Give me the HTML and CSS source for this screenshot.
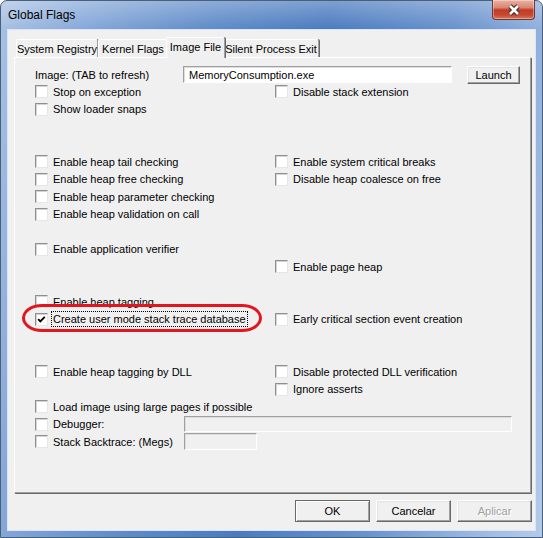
FILE: index.html
```html
<!DOCTYPE html>
<html>
  <head>
    <link rel="stylesheet" href="styles.css">
  </head>
  <body>
    <div class="window">
      <div class="titlebar">
        <span class="title">Global Flags</span>
        <div class="close">
          <svg width="16" height="12" viewBox="0 0 16 12">
            <path d="M4 2 L12 10 M12 2 L4 10" stroke="#3b2622" stroke-width="4.6" fill="none"/>
            <path d="M4 2 L12 10 M12 2 L4 10" stroke="#fff" stroke-width="2.6" fill="none"/>
          </svg>
        </div>
      </div>

      <div class="client">
        <div class="tabs">
          <div class="tab tab-registry">System Registry</div>
          <div class="tab tab-kernel">Kernel Flags</div>
          <div class="tab tab-image selected">Image File</div>
          <div class="tab tab-silent">Silent Process Exit</div>
        </div>

        <div class="panel">
          <div class="image-row">
            <span class="image-label">Image: (TAB to refresh)</span>
            <div class="textbox image-name">MemoryConsumption.exe</div>
            <div class="btn launch">Launch</div>
          </div>

          <div class="flags">
            <div class="row">
              <label class="check"><span class="box"></span>Stop on exception</label>
              <label class="check"><span class="box"></span>Disable stack extension</label>
            </div>
            <div class="row">
              <label class="check"><span class="box"></span>Show loader snaps</label>
            </div>
            <div class="row"></div>
            <div class="row"></div>
            <div class="row">
              <label class="check"><span class="box"></span>Enable heap tail checking</label>
              <label class="check"><span class="box"></span>Enable system critical breaks</label>
            </div>
            <div class="row">
              <label class="check"><span class="box"></span>Enable heap free checking</label>
              <label class="check"><span class="box"></span>Disable heap coalesce on free</label>
            </div>
            <div class="row">
              <label class="check"><span class="box"></span>Enable heap parameter checking</label>
            </div>
            <div class="row">
              <label class="check"><span class="box"></span>Enable heap validation on call</label>
            </div>
            <div class="row"></div>
            <div class="row">
              <label class="check"><span class="box"></span>Enable application verifier</label>
            </div>
            <div class="row">
              <div class="check"></div>
              <label class="check"><span class="box"></span>Enable page heap</label>
            </div>
            <div class="row"></div>
            <div class="row">
              <label class="check"><span class="box"></span>Enable heap tagging</label>
            </div>
            <div class="row marked">
              <label class="check">
                <span class="box">
                  <svg width="11" height="11" viewBox="0 0 11 11">
                    <path d="M2.2 5.2 L4.3 7.4 L8.8 2.8" stroke="#000" stroke-width="1.9" fill="none"/>
                  </svg>
                </span>
                <span class="focus">Create user mode stack trace database</span>
              </label>
              <label class="check"><span class="box"></span>Early critical section event creation</label>
              <span class="highlight"></span>
            </div>
            <div class="row"></div>
            <div class="row"></div>
            <div class="row">
              <label class="check"><span class="box"></span>Enable heap tagging by DLL</label>
              <label class="check"><span class="box"></span>Disable protected DLL verification</label>
            </div>
            <div class="row">
              <div class="check"></div>
              <label class="check"><span class="box"></span>Ignore asserts</label>
            </div>
            <div class="row">
              <label class="check wide"><span class="box"></span>Load image using large pages if possible</label>
            </div>
            <div class="row">
              <label class="check short"><span class="box"></span>Debugger:</label>
              <div class="textbox disabled debugger"></div>
            </div>
            <div class="row">
              <label class="check short"><span class="box"></span>Stack Backtrace: (Megs)</label>
              <div class="textbox disabled megs"></div>
            </div>
          </div>
        </div>

        <div class="actions">
          <div class="btn default">OK</div>
          <div class="btn">Cancelar</div>
          <div class="btn disabled">Aplicar</div>
        </div>
      </div>
    </div>
  </body>
</html>
```

FILE: styles.css
```css
* {
  box-sizing: border-box;
}
body {
  margin: 0;
  font-family: "Liberation Sans", Arial, sans-serif;
  font-size: 11px;
  color: #000;
  background: #fff;
}
.window {
  width: 543px;
  height: 538px;
  display: flex;
  flex-direction: column;
  padding: 0 7px 7px 7px;
  border: 1px solid #4c5f78;
  border-radius: 7px 7px 0 0;
  background:
    linear-gradient(to bottom, rgba(255, 255, 255, 0.28), rgba(255, 255, 255, 0) 28px),
    linear-gradient(100deg, #a9c2e4 0%, #86a8d9 14%, #5f8bc8 34%, #4b7bbf 52%, #6992cd 72%, #a2bde4 92%, #b3cbea 100%);
}
.titlebar {
  height: 29px;
  display: flex;
  align-items: flex-start;
}
.title {
  margin-top: 7px;
  font-size: 12px;
  color: #000;
}
.close {
  margin-left: auto;
  margin-top: -1px;
  width: 43px;
  height: 20px;
  display: flex;
  align-items: center;
  justify-content: center;
  border: 1px solid #6e3a33;
  border-top: none;
  border-radius: 0 0 4px 4px;
  background: linear-gradient(to bottom, #e9b2a4 0%, #d98672 40%, #c03b25 52%, #c54730 78%, #d9775c 100%);
  box-shadow: inset 0 0 0 1px rgba(255, 255, 255, 0.35);
}
.client {
  flex: 1;
  display: flex;
  flex-direction: column;
  padding: 7px 4px 0 6px;
  background: #f0f0f0;
  box-shadow: 0 0 0 1px #dbe5f3;
}

/* tabs */
.tabs {
  height: 20px;
  display: flex;
  align-items: flex-end;
  padding-left: 2px;
}
.tab {
  flex: none;
  height: 18px;
  display: flex;
  align-items: center;
  justify-content: center;
  white-space: nowrap;
  background: #f0f0f0;
  border-top: 1px solid #fff;
  border-left: 1px solid #fff;
  border-right: 1px solid #a0a0a0;
  border-radius: 2px 2px 0 0;
  box-shadow: 1px 0 0 #696969;
}
.tab-registry {
  width: 82px;
}
.tab-kernel {
  width: 70px;
}
.tab-image {
  width: 59px;
}
.tab-silent {
  width: 96px;
}
.tab.selected {
  position: relative;
  z-index: 1;
  height: 21px;
  margin: 0 -2px -1px -2px;
  padding-bottom: 3px;
}

/* panel */
.panel {
  height: 436px;
  padding: 8px 0 0 20px;
  border-top: 1px solid #fff;
  border-left: 1px solid #fff;
  border-right: 1px solid #a0a0a0;
  border-bottom: 1px solid #a0a0a0;
  box-shadow: 1px 1px 0 #696969;
}
.image-row {
  height: 17px;
  display: flex;
  align-items: center;
}
.image-label {
  width: 148px;
}
.textbox {
  height: 17px;
  display: flex;
  align-items: center;
  padding-left: 5px;
  background: #fff;
  border: 1px solid;
  border-color: #a0a0a0 #fff #fff #a0a0a0;
  box-shadow: inset 1px 1px 0 #dcdcdc;
}
.textbox.disabled {
  background: #f0f0f0;
}
.image-name {
  width: 269px;
}
.btn {
  height: 22px;
  width: 75px;
  display: flex;
  align-items: center;
  justify-content: center;
  background: #f0f0f0;
  border: 1px solid;
  border-color: #fff #696969 #696969 #fff;
  box-shadow: inset -1px -1px 0 #a0a0a0, inset 1px 1px 0 #e3e3e3;
}
.launch {
  width: 53px;
  height: 18px;
  margin-left: 15px;
  margin-top: 1px;
}

/* flags */
.flags {
  display: flex;
  flex-direction: column;
}
.row {
  position: relative;
  height: 17.5px;
  display: flex;
  align-items: center;
}
.check {
  width: 240px;
  display: flex;
  align-items: center;
  gap: 5px;
  white-space: nowrap;
}
.check.wide {
  width: auto;
}
.check.short {
  width: 149px;
}
.box {
  width: 13px;
  height: 13px;
  flex: none;
  display: flex;
  align-items: center;
  justify-content: center;
  background: #fff;
  border: 1px solid;
  border-color: #8f8f8f #e6e6e6 #e6e6e6 #8f8f8f;
  box-shadow: inset 1px 1px 0 #d4d4d4;
}
.focus {
  outline: 1px dotted #000;
  outline-offset: 1px;
}
.highlight {
  position: absolute;
  left: -13px;
  top: -7px;
  width: 240px;
  height: 28px;
  border: 3.5px solid #e3161f;
  border-radius: 20px / 14px;
  pointer-events: none;
}
.debugger {
  width: 328px;
  height: 16px;
}
.megs {
  width: 73px;
}

/* bottom buttons */
.actions {
  display: flex;
  justify-content: flex-end;
  gap: 6px;
  margin-top: 7px;
  margin-right: -1px;
}
.btn.default {
  border: 1px solid #696969;
  box-shadow: inset 1px 1px 0 #fff, inset -1px -1px 0 #a0a0a0;
}
.btn.disabled {
  color: #a0a0a0;
  text-shadow: 1px 1px 0 #fff;
}
```
